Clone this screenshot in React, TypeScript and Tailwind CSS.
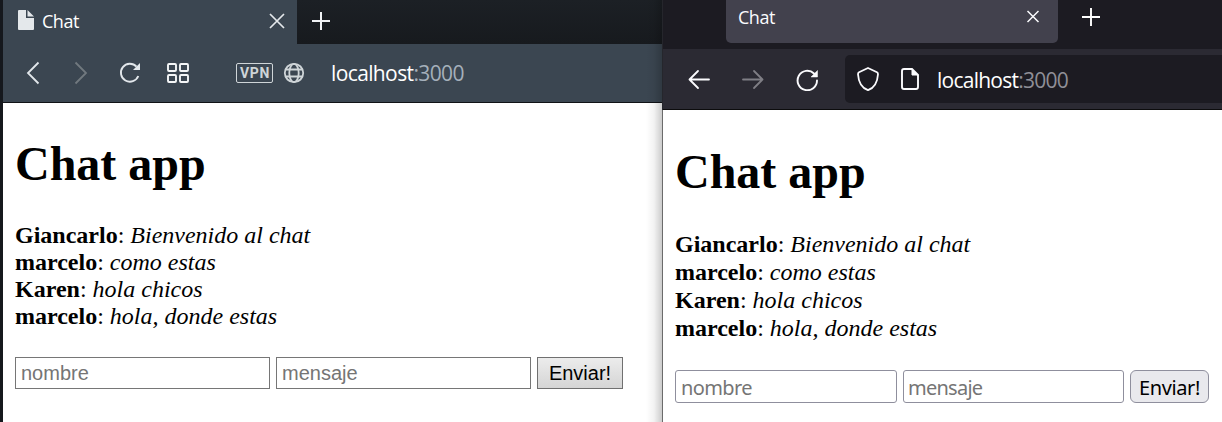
import type { ReactNode } from "react";

const messages = [
  { name: "Giancarlo", text: "Bienvenido al chat" },
  { name: "marcelo", text: "como estas" },
  { name: "Karen", text: "hola chicos" },
  { name: "marcelo", text: "hola, donde estas" },
];

function Icon({ className, children }: { className: string; children: ReactNode }) {
  return (
    <svg viewBox="0 0 24 24" fill="none" stroke="currentColor" className={`h-6 w-6 shrink-0 ${className}`}>
      {children}
    </svg>
  );
}

function Messages({ className }: { className: string }) {
  return (
    <div className={`text-2xl whitespace-nowrap ${className}`}>
      {messages.map((m, i) => (
        <p key={i}>
          <b>{m.name}</b>: <i>{m.text}</i>
        </p>
      ))}
    </div>
  );
}

function OperaWindow() {
  return (
    <section className="relative flex w-[659px] shrink-0 flex-col bg-white">
      <div className="flex h-11 bg-linear-to-b from-[#1c2025] to-[#171a1e]">
        <div className="flex w-[294px] items-start bg-[#3b4651] text-[#e4e8eb]">
          <Icon className="mt-2 ml-[11px]">
            <path d="M5 2h7v8h8v11a1 1 0 0 1-1 1H5a1 1 0 0 1-1-1V3a1 1 0 0 1 1-1z M13.500 2l6.500 6.500h-6.500z" fill="currentColor" stroke="none" />
          </Icon>
          <span className="mt-[9px] ml-1 w-[206px] text-[18px] leading-6 tracking-[-0.5px] text-white">Chat</span>
          <Icon className="mt-[9px] ml-[17px]">
            <path d="M5 5l14 14M19 5L5 19" strokeWidth="1.7" />
          </Icon>
        </div>
        <Icon className="mt-[9px] ml-3 text-[#f1f3f5]">
          <path d="M3 12h18M12 3v18" strokeWidth="2" />
        </Icon>
      </div>
      <div className="flex h-[59px] items-center border-b border-[#101216] bg-[#3b4651] text-[#e2e7eb]">
        <Icon className="ml-[18px]">
          <path d="M17.500 1.500L7 12l10.500 10.500" strokeWidth="1.8" />
        </Icon>
        <Icon className="ml-6 text-[#71797f]">
          <path d="M6.500 1.500L17 12 6.500 22.500" strokeWidth="1.800" />
        </Icon>
        <Icon className="ml-[25px]">
          <path d="M20.300 15A9 9 0 1 1 18.500 5.600" strokeWidth="1.900" />
          <path d="M22 2v7h-7z" fill="currentColor" stroke="none" />
        </Icon>
        <Icon className="ml-6 text-[#f4f6f7]">
          <rect x="2" y="3" width="8" height="7" rx="1" strokeWidth="1.900" />
          <rect x="14" y="3" width="8" height="7" rx="1" strokeWidth="1.900" />
          <rect x="2" y="14" width="8" height="7" rx="1" strokeWidth="1.900" />
          <rect x="14" y="14" width="8" height="7" rx="1" strokeWidth="1.900" />
        </Icon>
        <span className="ml-[46px] flex h-5 w-[37px] items-center justify-center rounded-[2px] border border-[#cfd5d8] pl-px font-[Roboto,sans-serif] text-[14px] leading-none font-bold tracking-[0.6px] text-[#cfd5d8]">
          VPN
        </span>
        <Icon className="ml-[9px] text-[#cfd5d8]">
          <circle cx="12" cy="12" r="9.200" strokeWidth="1.800" />
          <ellipse cx="12" cy="12" rx="4.700" ry="9.200" strokeWidth="1.800" />
          <path d="M3.500 8.500h17M3.500 15.500h17" strokeWidth="1.800" />
        </Icon>
        <span className="ml-[25px] text-[21px] leading-7 tracking-[-0.62px] text-white">
          localhost<span className="text-[#a5b0bb]">:3000</span>
        </span>
      </div>
      <div className="flex flex-col pt-[33px] pl-3 font-['Liberation_Serif',serif] text-black">
        <h1 className="text-5xl leading-[55px] font-bold">Chat app</h1>
        <Messages className="mt-[31px] leading-[27px]" />
        <form className="mt-[27px] flex gap-1.5 font-['Liberation_Sans',sans-serif] text-[20px]">
          <input placeholder="nombre" className="h-8 w-[255px] border border-[#767676] px-[5px] placeholder:text-[#757575]" />
          <input placeholder="mensaje" className="h-8 w-[255px] border border-[#767676] px-[5px] placeholder:text-[#757575]" />
          <button type="button" className="h-8 w-[86px] border border-[#707070] bg-linear-to-b from-[#ececec] to-[#d5d5d5]">
            Enviar!
          </button>
        </form>
      </div>
      <div className="absolute inset-y-0 right-0 w-4 bg-linear-to-r from-transparent via-black/5 to-black/20" />
    </section>
  );
}

function FirefoxWindow() {
  return (
    <section className="flex flex-1 flex-col bg-white">
      <div className="flex h-[49px] items-start bg-[#1c1b22]">
        <div className="ml-[63px] flex h-[43px] w-[332px] items-start rounded-b-[5px] bg-[#42414d] text-[#fbfbfe]">
          <span className="mt-[5px] ml-3 w-[272px] text-[18px] leading-6 tracking-[-0.5px]">Chat</span>
          <Icon className="mt-1 ml-[11px]">
            <path d="M6.500 7l11 11M17.500 7l-11 11" strokeWidth="1.500" />
          </Icon>
        </div>
        <Icon className="mt-[5px] ml-[21px] text-white">
          <path d="M3 12h18M12 3v18" strokeWidth="1.900" />
        </Icon>
      </div>
      <div className="flex h-[61px] items-center border-b border-[#0c0c0d] bg-[#2b2a33] text-[#fbfbfe]">
        <Icon className="ml-6">
          <path d="M22 12.500H2.500M11 4l-8.500 8.500L11 21" strokeWidth="1.800" strokeLinecap="round" strokeLinejoin="round" />
        </Icon>
        <Icon className="ml-[30px] text-[#7f7e85]">
          <path d="M2 12.500h19.500M13 4l8.500 8.500L13 21" strokeWidth="1.800" strokeLinecap="round" strokeLinejoin="round" />
        </Icon>
        <Icon className="ml-[30px]">
          <path d="M22 13.500A9.700 9.700 0 1 1 19 6.500" strokeWidth="1.900" strokeLinecap="round" />
          <path d="M22.500 3.500v6.500h-6.500z" fill="currentColor" stroke="currentColor" strokeWidth=".5" strokeLinejoin="round" />
        </Icon>
        <div className="ml-[26px] flex h-12 flex-1 items-center rounded-l-[5px] bg-[#1c1b22]">
          <Icon className="ml-[11px]">
            <path d="M12 1l9 4.200c1 .5 1 1 1 2C21.500 15 18 21 12 23.200 6 21 2.500 15 2 7.200c0-1 0-1.500 1-2z" strokeWidth="1.800" strokeLinejoin="round" />
          </Icon>
          <Icon className="ml-[18px]">
            <path d="M6 2h8l6 6v12a2 2 0 0 1-2 2H6a2 2 0 0 1-2-2V4a2 2 0 0 1 2-2z" strokeWidth="1.900" />
            <path d="M14 2l6 6h-6z" fill="currentColor" />
          </Icon>
          <span className="mt-0.5 ml-[15px] text-[21px] leading-7 tracking-[-0.75px] text-white">
            localhost<span className="text-[#8f8f97]">:3000</span>
          </span>
        </div>
      </div>
      <div className="flex flex-col pt-[34px] pl-3 font-['Liberation_Serif',serif] text-black">
        <h1 className="text-5xl leading-[55px] font-bold">Chat app</h1>
        <Messages className="mt-[31px] leading-7" />
        <form className="mt-7 flex gap-1.5 font-['Noto_Sans',sans-serif] text-[20px] tracking-[-0.6px]">
          <input placeholder="nombre" className="h-[33px] w-[222px] rounded-[3px] border border-[#8f8f9d] px-[5px] pt-0.5 placeholder:text-[#757575]" />
          <input placeholder="mensaje" className="h-[33px] w-[221px] rounded-[3px] border border-[#8f8f9d] px-1 pt-0.5 tracking-[-0.75px] placeholder:text-[#757575]" />
          <button type="button" className="h-[33px] w-[79px] rounded-[6px] border border-[#8f8f9d] bg-[#e9e9ed] pt-0.5 tracking-[-0.4px]">
            Enviar!
          </button>
        </form>
      </div>
    </section>
  );
}

export default function App() {
  return (
    <main className="flex h-[422px] w-[1222px] overflow-hidden bg-[#15181d] pl-[3px] font-['Open_Sans',sans-serif]">
      <OperaWindow />
      <div className="flex w-px shrink-0 flex-col bg-[#6b6b6b]">
        <div className="h-[110px] bg-[#25262c]" />
      </div>
      <FirefoxWindow />
    </main>
  );
}
